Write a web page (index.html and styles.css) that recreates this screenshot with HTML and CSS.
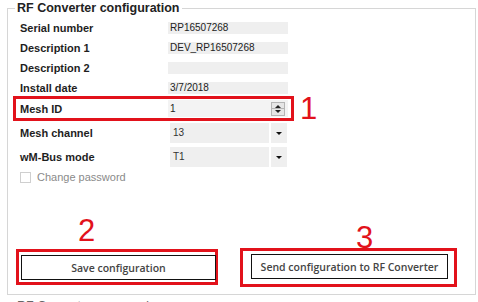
FILE: index.html
```html
<!DOCTYPE html>
<html>
<head>
    <title>RF Converter configuration</title>
    <link rel="stylesheet" href="styles.css">
</head>
<body>
    <fieldset class="panel">
        <legend>RF Converter configuration</legend>
        <div class="rows">
            <div class="row">
                <span class="label">Serial number</span>
                <span class="value">RP16507268</span>
            </div>
            <div class="row">
                <span class="label">Description 1</span>
                <span class="value">DEV_RP16507268</span>
            </div>
            <div class="row">
                <span class="label">Description 2</span>
                <span class="value"></span>
            </div>
            <div class="row">
                <span class="label">Install date</span>
                <span class="value">3/7/2018</span>
            </div>
            <div class="marked">
                <div class="row mesh">
                    <span class="label">Mesh ID</span>
                    <span class="spin">
                        <span class="spin-text">1</span>
                        <span class="spin-btns">
                            <span class="spin-up"></span>
                            <span class="spin-down"></span>
                        </span>
                    </span>
                </div>
                <span class="num num-1">1</span>
            </div>
            <div class="row sel-row">
                <span class="label">Mesh channel</span>
                <span class="select"><span class="select-text">13</span><span class="arrow"></span></span>
            </div>
            <div class="row sel-row">
                <span class="label">wM-Bus mode</span>
                <span class="select"><span class="select-text">T1</span><span class="arrow"></span></span>
            </div>
            <div class="row check-row">
                <span class="checkbox"></span>
                <span class="check-label">Change password</span>
            </div>
        </div>
        <div class="actions">
            <div class="action action-save">
                <div class="num">2</div>
                <div class="frame">
                    <button class="btn">Save configuration</button>
                </div>
            </div>
            <div class="action action-send">
                <div class="num">3</div>
                <div class="frame">
                    <button class="btn">Send configuration to RF Converter</button>
                </div>
            </div>
        </div>
    </fieldset>
    <fieldset class="panel next">
        <legend>RF Converter password</legend>
    </fieldset>
</body>
</html>
```

FILE: styles.css
```css
body {
    margin: 0;
    font-family: "Liberation Sans", Arial, sans-serif;
    background-color: #fff;
    color: #1a1a1a;
    overflow: hidden;
}

.panel {
    margin: 0 2px 0 7px;
    padding: 2px 0 7px 7px;
    border: 1px solid #d6d6d6;
}

.panel legend {
    padding: 0 2px;
    font-size: 12.5px;
    font-weight: bold;
    line-height: 16px;
    color: #222;
}

.panel.next {
    margin-top: 3px;
}

.panel.next legend {
    color: #666;
    font-weight: normal;
}

.rows {
    padding-left: 5px;
}

.row {
    display: flex;
    align-items: center;
    height: 20px;
}

.label {
    width: 148px;
    font-size: 11px;
    font-weight: bold;
    color: #1e1e1e;
}

.value {
    box-sizing: border-box;
    width: 120px;
    height: 12px;
    padding-left: 2px;
    background-color: #efefef;
    font-size: 10px;
    line-height: 12px;
    color: #222;
}

.marked {
    display: flex;
    align-items: flex-start;
    height: 25px;
    margin-top: -2px;
    margin-left: -7px;
}

.row.mesh {
    box-sizing: border-box;
    height: 25px;
    padding: 0 3px 0 4px;
    border: 3px solid #e2121b;
}

.spin {
    box-sizing: border-box;
    display: flex;
    align-items: center;
    justify-content: space-between;
    width: 120px;
    height: 17px;
    padding: 0 3px 0 2px;
    background-color: #f3f3f3;
    font-size: 10px;
    color: #222;
}

.spin-btns {
    display: flex;
    flex-direction: column;
    width: 14px;
    height: 14px;
    border: 1px solid #b5b5b5;
    box-sizing: border-box;
    background-color: #e6e6e6;
}

.spin-up, .spin-down {
    position: relative;
    flex: 1;
}

.spin-up {
    border-bottom: 1px solid #b5b5b5;
}

.spin-up::after, .spin-down::after {
    content: "";
    position: absolute;
    left: 3px;
    top: 2px;
    border-left: 3px solid transparent;
    border-right: 3px solid transparent;
}

.spin-up::after {
    border-bottom: 3px solid #222;
}

.spin-down::after {
    top: 1px;
    border-top: 3px solid #222;
}

.num {
    font-size: 31px;
    line-height: 31px;
    color: #e2121b;
}

.num-1 {
    margin-left: 6px;
    line-height: 25px;
}

.sel-row {
    margin-top: 2px;
}

.sel-row + .sel-row {
    margin-top: 4px;
}

.select {
    display: flex;
    margin-left: 2px;
    width: 117px;
    height: 20px;
    background-color: #efefef;
}

.select-text {
    flex: 1;
    padding-left: 3px;
    font-size: 10px;
    line-height: 20px;
    color: #333;
}

.arrow {
    position: relative;
    width: 16px;
    border-left: 2px solid #fff;
}

.arrow::after {
    content: "";
    position: absolute;
    left: 5px;
    top: 9px;
    border-left: 3px solid transparent;
    border-right: 3px solid transparent;
    border-top: 3px solid #111;
}

.check-row {
    margin-top: 2px;
    height: 16px;
}

.checkbox {
    box-sizing: border-box;
    width: 11px;
    height: 11px;
    border: 1px solid #cfcfcf;
    background-color: #fff;
}

.check-label {
    margin-left: 6px;
    font-size: 11px;
    color: #8a8a8a;
}

.actions {
    display: flex;
    margin-top: 29px;
}

.action-save {
    margin-left: 1px;
    width: 202px;
}

.action-save .num {
    margin-top: 1px;
    padding-left: 62px;
}

.action-save .frame {
    margin-top: 3px;
    padding: 3px 0 2px 2px;
}

.action-send {
    margin-left: 22px;
    width: 217px;
}

.action-send .num {
    margin-top: 8px;
    padding-left: 116px;
}

.action-send .frame {
    margin-top: -5px;
    padding: 3px 6px 5px 8px;
}

.frame {
    border: 3px solid #e2121b;
}

.btn {
    display: block;
    width: 100%;
    height: 25px;
    padding: 0;
    border: 1px solid #111;
    background-color: #fff;
    font-family: "Open Sans", "Liberation Sans", sans-serif;
    font-size: 10.5px;
    font-weight: 600;
    color: #444;
    cursor: pointer;
}

.action-save .btn {
    width: 195px;
}
```
